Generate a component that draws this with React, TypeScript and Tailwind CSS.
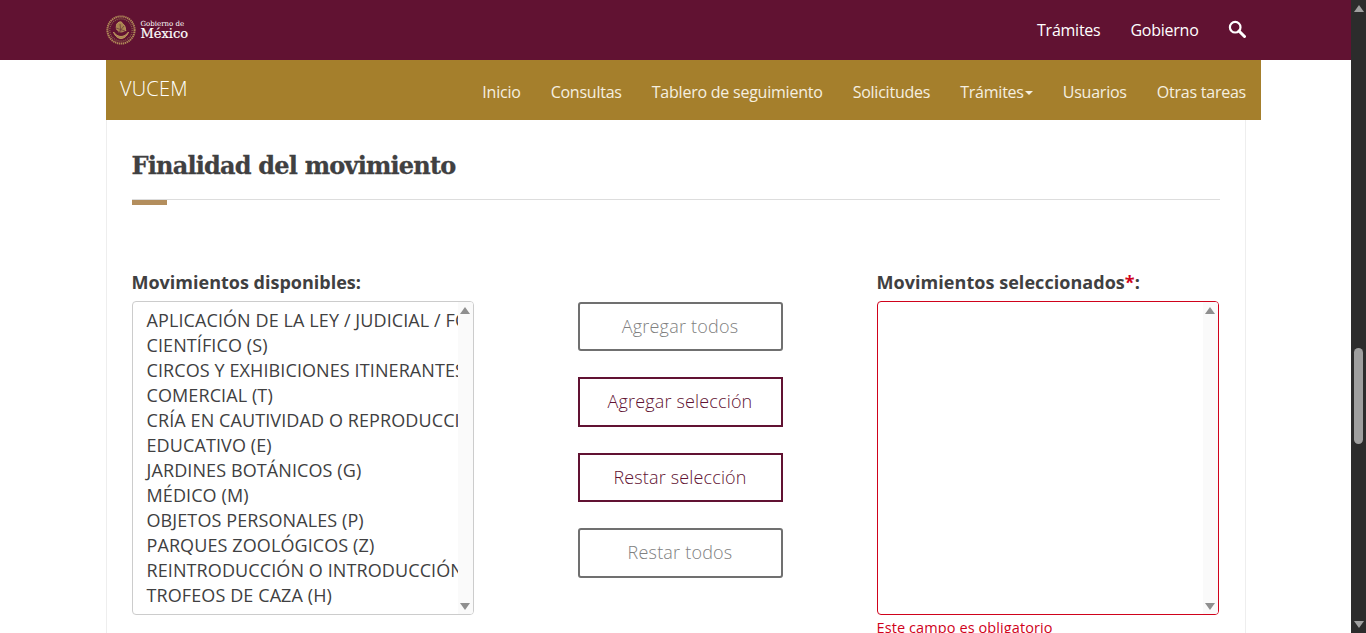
const movimientos = [
  "APLICACIÓN DE LA LEY / JUDICIAL / FORENSE (L)",
  "CIENTÍFICO (S)",
  "CIRCOS Y EXHIBICIONES ITINERANTES (Q)",
  "COMERCIAL (T)",
  "CRÍA EN CAUTIVIDAD O REPRODUCCIÓN ARTIFICIAL (B)",
  "EDUCATIVO (E)",
  "JARDINES BOTÁNICOS (G)",
  "MÉDICO (M)",
  "OBJETOS PERSONALES (P)",
  "PARQUES ZOOLÓGICOS (Z)",
  "REINTRODUCCIÓN O INTRODUCCIÓN A LA NATURALEZA (N)",
  "TROFEOS DE CAZA (H)",
];

const navItems = ["Inicio", "Consultas", "Tablero de seguimiento", "Solicitudes"];

function Emblem() {
  return (
    <svg width="30" height="30" viewBox="0 0 30 30" fill="none">
      <circle cx="15" cy="15" r="13.6" stroke="#b08a58" strokeWidth="2" strokeDasharray="1.400 0.600" />
      <circle cx="15" cy="15" r="11.200" stroke="#8c6b4a" strokeWidth="1.200" strokeDasharray="1 1" />
      <path
        d="M7.500 17c1.500 4.500 5 6.500 7.500 6.500s6-2 7.500-6.500c-2 3-5 4.500-7.500 4.500s-5.500-1.500-7.500-4.500zM10.500 9.500c1.500-2.500 3.500-3 5-2.500.5 1.500 2 2 3 3.500 1 1.500.5 3.500 1.500 5-2 0-3 1.500-5 1.500s-3.500-1.500-4.500-3c-.5-1.500 0-3 0-4.500z"
        fill="#a8844f"
        stroke="#bd9760"
        strokeWidth="1"
      />
      <path d="M10 13l9 3M12 18l6-7M14 9l1 9" stroke="#6e3a3c" strokeWidth="0.800" />
    </svg>
  );
}

function Scroller() {
  return (
    <div className="flex h-full w-[15px] shrink-0 flex-col items-center justify-between bg-[#fafafa] pt-[5px] pr-px pb-[4px]">
      <div className="h-0 w-0 border-x-[5px] border-b-[7px] border-x-transparent border-b-[#8f8f8f]" />
      <div className="h-0 w-0 border-x-[5px] border-t-[7px] border-x-transparent border-t-[#8f8f8f]" />
    </div>
  );
}

function ActionButton({ label, active }: { label: string; active?: boolean }) {
  return (
    <button
      className={
        active
          ? "flex h-[49.500px] w-[205px] items-center justify-center border-2 border-[#611232] bg-white text-[18px] font-light tracking-[0.15px] text-[#611232]"
          : "flex h-[49.500px] w-[205px] items-center justify-center rounded-[3px] border-2 border-[#707070] bg-white text-[18px] font-light tracking-[0.2px] text-[#808080]"
      }
    >
      {label}
    </button>
  );
}

export default function App() {
  return (
    <div className="flex h-[633px] overflow-hidden bg-white font-['Open_Sans','Noto_Sans',sans-serif]">
      <div className="min-w-0 flex-1">
        <header className="h-[60px] bg-[#611232]">
          <div className="mx-auto flex h-full w-[1140px] items-center justify-between">
            <div className="flex items-center gap-[5px] pb-[1px]">
              <Emblem />
              <div className="flex flex-col font-['DejaVu_Serif',serif] text-white">
                <span className="text-[7px] leading-[8px]">Gobierno de</span>
                <span className="text-[13px] leading-[11px] [-webkit-text-stroke:0.2px_white]">México</span>
              </div>
            </div>
            <div className="flex items-center text-[16px] tracking-[-0.25px] text-white">
              <span>Trámites</span>
              <span className="ml-[30px]">Gobierno</span>
              <svg className="mb-[3px] ml-[29px]" width="18" height="18" viewBox="0 0 18 18" fill="none">
                <circle cx="7.200" cy="7.200" r="5.300" stroke="white" strokeWidth="2.200" />
                <path d="M11 11l5.500 5.500" stroke="white" strokeWidth="3" strokeLinecap="round" />
              </svg>
            </div>
          </div>
        </header>

        <div className="mx-auto w-[1155px] translate-x-[8px]">
          <nav className="flex h-[60px] items-center justify-between bg-[#a57f2c] pl-[14px] pr-[15px] text-[16px] tracking-[-0.23px] text-[#f5efe0]">
            <span className="pb-[2px] text-[20px] font-light tracking-[0.2px] text-white">VUCEM</span>
            <div className="flex items-center gap-[30px] pt-[4px]">
              {navItems.map((item) => (
                <span key={item}>{item}</span>
              ))}
              <span className="flex items-center">
                Trámites
                <span className="ml-[1px] mt-[2px] h-0 w-0 border-x-[4px] border-t-[4px] border-x-transparent border-t-[#f5efe0]" />
              </span>
              <span>Usuarios</span>
              <span>Otras tareas</span>
            </div>
          </nav>
        </div>

        <main className="mx-auto h-[513px] w-[1140px] border-x border-[#eeeeee] bg-white pl-[25px] pr-[25px]">
          <h1 className="pt-[29px] font-['DejaVu_Serif',serif] text-[24px] leading-[34px] font-bold tracking-[-0.8px] text-[#404041] [-webkit-text-stroke:0.3px_#404041]">
            Finalidad del movimiento
          </h1>
          <div className="mt-[16px] h-px bg-[#dddddd]" />
          <div className="h-[5px] w-[35px] bg-[#b38e5d]" />

          <div className="mt-[65px] flex">
            <div className="w-[342px]">
              <label className="block text-[18px] leading-[24px] font-bold text-[#404041]">Movimientos disponibles:</label>
              <div className="mt-[7px] flex h-[314px] overflow-hidden rounded-[4px] border border-[#cccccc] bg-white">
                <ul className="min-w-0 flex-1 overflow-hidden pt-[6px] pl-[14px] text-[18px] leading-[25px] tracking-[0.1px] whitespace-nowrap text-[#404041]">
                  {movimientos.map((m) => (
                    <li key={m}>{m}</li>
                  ))}
                </ul>
                <Scroller />
              </div>
            </div>

            <div className="mt-[31.6px] ml-[104px] flex w-[205px] flex-col gap-[26px]">
              <ActionButton label="Agregar todos" />
              <ActionButton label="Agregar selección" active />
              <ActionButton label="Restar selección" active />
              <ActionButton label="Restar todos" />
            </div>

            <div className="ml-[94px] w-[342px]">
              <label className="block text-[18px] leading-[24px] font-bold tracking-[0.05px] text-[#404041]">
                Movimientos seleccionados<span className="text-[#d0021b]">*</span>:
              </label>
              <div className="mt-[7px] flex h-[314px] justify-end overflow-hidden rounded-[4px] border border-[#d0021b] bg-white">
                <Scroller />
              </div>
              <p className="mt-[3px] text-[14.500px] leading-[20px] tracking-[0.1px] text-[#d0021b]">Este campo es obligatorio</p>
            </div>
          </div>
        </main>
      </div>

      <div className="relative flex h-full w-[15px] shrink-0 flex-col items-center justify-between bg-[#2c2c2c] py-[5px]">
        <div className="h-0 w-0 border-x-[5px] border-b-[7px] border-x-transparent border-b-[#a0a0a0]" />
        <div className="absolute top-[348px] left-[3px] h-[96px] w-[9px] rounded-full bg-[#9f9f9f]" />
        <div className="h-0 w-0 border-x-[5px] border-t-[7px] border-x-transparent border-t-[#a0a0a0]" />
      </div>
    </div>
  );
}
